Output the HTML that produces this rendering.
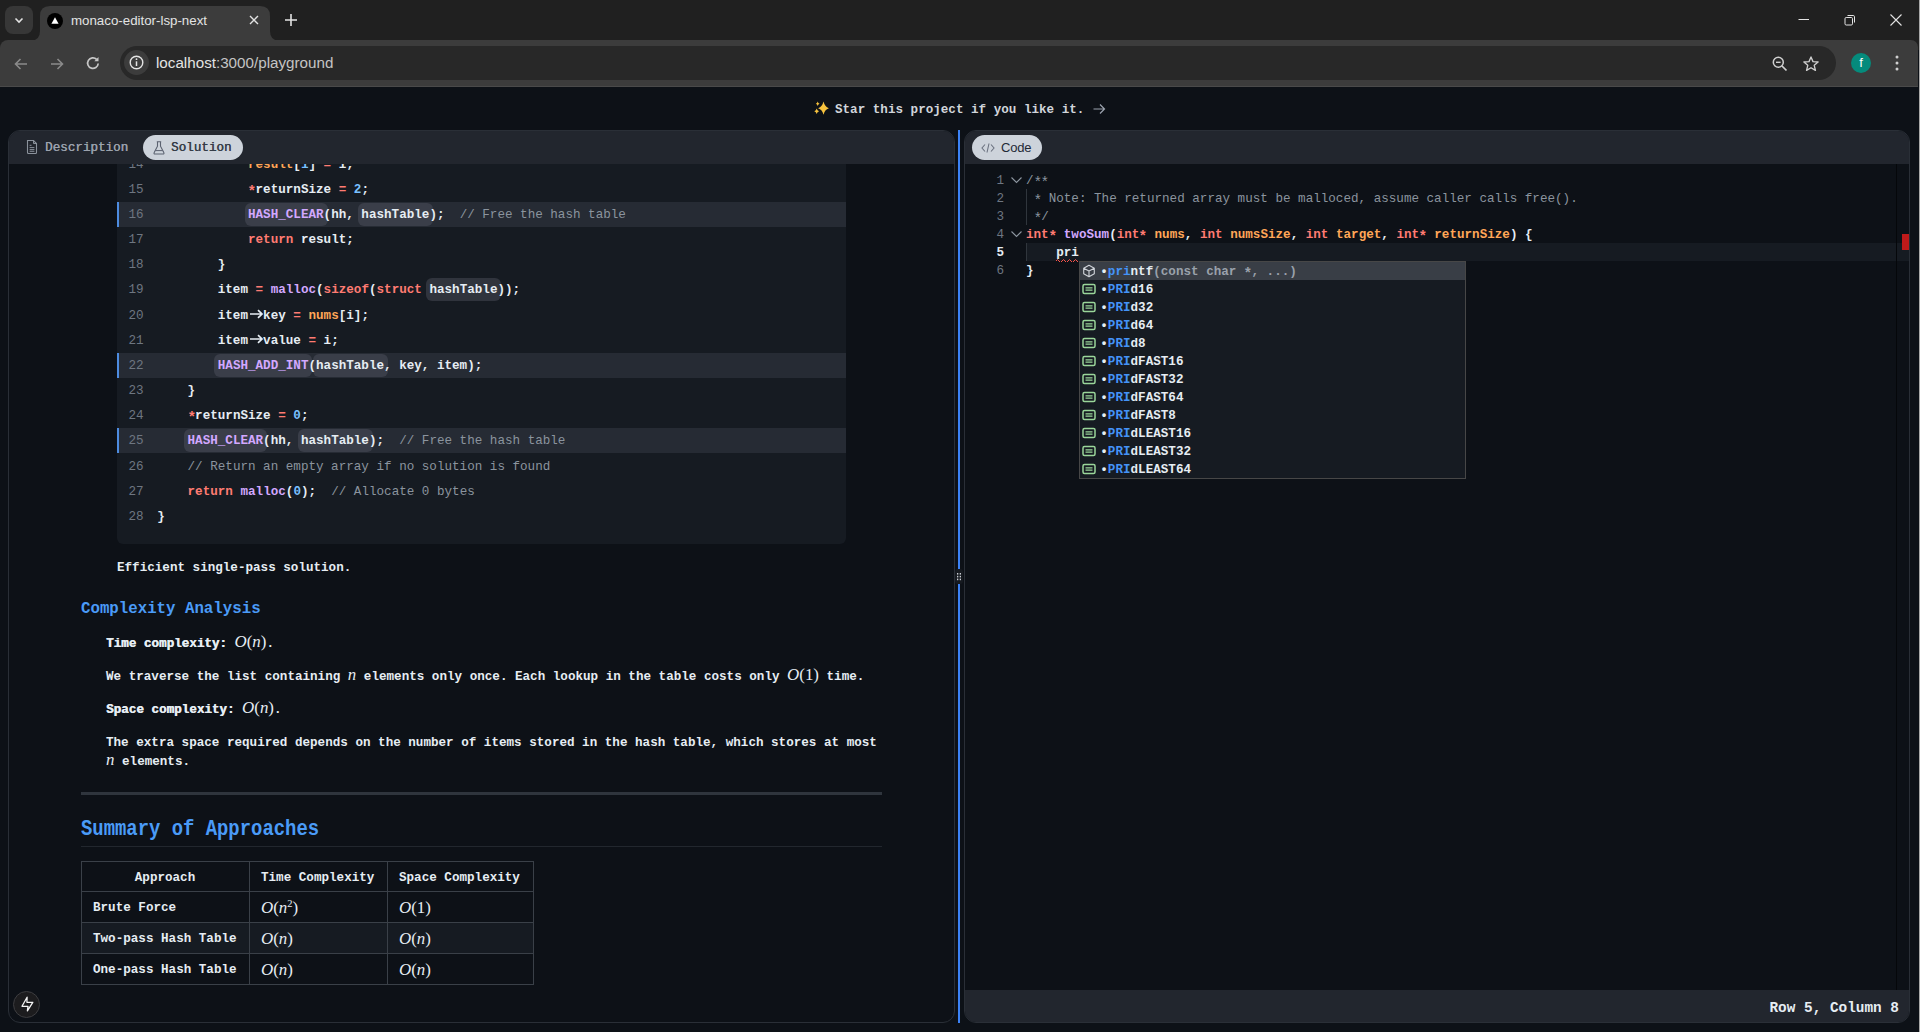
<!DOCTYPE html>
<html><head><meta charset="utf-8">
<style>
*{box-sizing:border-box;margin:0;padding:0}
html,body{width:1920px;height:1032px;overflow:hidden;background:#0d1117;font-family:"Liberation Sans",sans-serif}
.abs{position:absolute}
#tabstrip{left:0;top:0;width:1920px;height:50px;background:#202020}
#toolbar{left:0;top:40px;width:1918px;height:47px;background:#3c3c3c;border-radius:8px 7px 0 0}
.mono{font-family:"Liberation Mono",monospace}
#page{left:0;top:0;width:1920px;height:1032px}
.panel{border:1px solid #2a2f37;border-radius:12px;overflow:hidden;background:#0d1117}
.phead{left:0;top:0;right:0;height:33px;background:#22262e}
.pill{border-radius:13px;background:#cdd3db;color:#1f2329}
.ln{position:absolute;left:0;width:100%;height:25.15px;line-height:26.5px;white-space:pre;font-family:"Liberation Mono",monospace;font-size:12.6px;color:#e6edf3;font-weight:bold}
.num{position:absolute;left:0;width:27.5px;text-align:right;color:#6e7681;font-weight:normal}
.code{position:absolute;left:39.5px}
.k{color:#ff7b72}.f{color:#d2a8ff}.n{color:#79c0ff}.v{color:#ffa657}.c{color:#8b949e;font-weight:normal}
.hl{background:#262b34;border-left:2px solid #4f8fe0}
.tok{position:absolute;height:23px;top:1px;border-radius:6px;background:#30343d}
.hl .tok{background:#3a3e49}
.math{font-family:"Liberation Serif",serif;font-style:italic;font-size:15px}
.mr{font-family:"Liberation Serif",serif;font-style:normal;font-size:15px}
.ed{position:absolute;left:0;width:100%;height:18px;line-height:20px;font-weight:bold;white-space:pre;font-family:"Liberation Mono",monospace;font-size:12.6px;color:#e6edf3}
</style><style>
.mi{font-family:"Liberation Serif",serif;font-style:italic;font-size:16.9px;font-weight:normal;line-height:0}
.mr{font-family:"Liberation Serif",serif;font-style:normal;font-size:16.9px;font-weight:normal;line-height:0}
.ast{display:inline-block;transform:translateY(2.6px) scale(1.15)}
.xb{text-shadow:0.45px 0 0 currentColor}
.ms{font-family:"Liberation Serif",serif;font-size:10.5px;font-weight:normal;vertical-align:6px;line-height:0}
</style></head><body>
<!-- Chrome tab strip -->
<div id="tabstrip" class="abs">
  <div class="abs" style="left:5px;top:6px;width:28px;height:28px;border-radius:8px;background:#373737"></div>
  <svg class="abs" style="left:13px;top:14px" width="12" height="12" viewBox="0 0 12 12"><path d="M2.5 4.5 L6 8 L9.5 4.5" stroke="#e3e3e3" stroke-width="1.6" fill="none"/></svg>
  <svg class="abs" style="left:0;top:0" width="300" height="41" viewBox="0 0 300 41"><path d="M31 40.5 Q40 40.5 40 31 L40 16 Q40 6 50 6 L260 6 Q270 6 270 16 L270 31 Q270 40.5 279 40.5 Z" fill="#3c3c3c"/></svg>
  <div class="abs" style="left:47px;top:13px;width:16px;height:16px;border-radius:50%;background:#000"></div>
  <svg class="abs" style="left:47px;top:13px" width="16" height="16" viewBox="0 0 16 16"><path d="M8 4.2 L11.6 10.8 L4.4 10.8 Z" fill="#fff"/></svg>
  <div class="abs" style="left:71px;top:13px;font-size:13.3px;color:#e3e3e3;line-height:16px">monaco-editor-lsp-next</div>
  <svg class="abs" style="left:248px;top:14px" width="12" height="12" viewBox="0 0 12 12"><path d="M2 2 L10 10 M10 2 L2 10" stroke="#e3e3e3" stroke-width="1.4"/></svg>
  <svg class="abs" style="left:284px;top:13px" width="14" height="14" viewBox="0 0 14 14"><path d="M7 1 V13 M1 7 H13" stroke="#e3e3e3" stroke-width="1.6"/></svg>
  <svg class="abs" style="left:1797px;top:13px" width="14" height="12" viewBox="0 0 14 12"><path d="M1.5 6.5 H12" stroke="#e3e3e3" stroke-width="1"/></svg>
  <svg class="abs" style="left:1843px;top:13px" width="14" height="14" viewBox="0 0 14 14"><rect x="2" y="4.5" width="7.5" height="7.5" rx="1.2" stroke="#e3e3e3" stroke-width="1" fill="none"/><path d="M4.5 2.5 H10.2 Q11.5 2.5 11.5 3.8 V9.5" stroke="#e3e3e3" stroke-width="1" fill="none"/></svg>
  <svg class="abs" style="left:1889px;top:13px" width="14" height="14" viewBox="0 0 14 14"><path d="M1.5 1.5 L12.5 12.5 M12.5 1.5 L1.5 12.5" stroke="#e3e3e3" stroke-width="1.1"/></svg>
</div>
<!-- Toolbar -->
<div id="toolbar" class="abs">
  <svg class="abs" style="left:12px;top:15px" width="18" height="18" viewBox="0 0 18 18"><path d="M15 9 H3.5 M8.5 4 L3.5 9 L8.5 14" stroke="#8a8a8a" stroke-width="1.6" fill="none"/></svg>
  <svg class="abs" style="left:48px;top:15px" width="18" height="18" viewBox="0 0 18 18"><path d="M3 9 H14.5 M9.5 4 L14.5 9 L9.5 14" stroke="#8a8a8a" stroke-width="1.6" fill="none"/></svg>
  <svg class="abs" style="left:84px;top:14px" width="18" height="18" viewBox="0 0 18 18"><path d="M14.2 9.5 A5.3 5.3 0 1 1 12.6 5.3" stroke="#c7c7c7" stroke-width="1.7" fill="none"/><path d="M14.5 3 V7.2 H10.3 Z" fill="#c7c7c7"/></svg>
  <div class="abs" style="left:120px;top:6px;width:1716px;height:34px;border-radius:17px;background:#282828"></div>
  <div class="abs" style="left:124px;top:10px;width:25px;height:25px;border-radius:50%;background:#3c3c3c"></div>
  <svg class="abs" style="left:128px;top:14px" width="17" height="17" viewBox="0 0 17 17"><circle cx="8.5" cy="8.5" r="6.3" stroke="#e3e3e3" stroke-width="1.4" fill="none"/><path d="M8.5 7.3 V12" stroke="#e3e3e3" stroke-width="1.5"/><circle cx="8.5" cy="5.2" r="0.9" fill="#e3e3e3"/></svg>
  <div class="abs" style="left:156px;top:14px;font-size:15.2px;line-height:18px;color:#e3e3e3">localhost<span style="color:#c4c4c4">:3000/playground</span></div>
  <svg class="abs" style="left:1770.5px;top:14.5px" width="18" height="18" viewBox="0 0 18 18"><circle cx="7.3" cy="7.3" r="5" stroke="#d0d0d0" stroke-width="1.5" fill="none"/><path d="M11 11 L15.5 15.5" stroke="#d0d0d0" stroke-width="1.7"/><path d="M5 7.3 H9.6" stroke="#d0d0d0" stroke-width="1.4"/></svg>
  <svg class="abs" style="left:1801.5px;top:14.5px" width="18" height="18" viewBox="0 0 19 19"><path d="M9.5 2 L11.6 7 L17 7.4 L12.9 10.9 L14.2 16.2 L9.5 13.4 L4.8 16.2 L6.1 10.9 L2 7.4 L7.4 7 Z" stroke="#d0d0d0" stroke-width="1.4" fill="none" stroke-linejoin="round"/></svg>
  <div class="abs" style="left:1851px;top:13px;width:20px;height:20px;border-radius:50%;background:#058b7c;color:#fff;font-size:13px;line-height:20px;text-align:center">f</div>
  <svg class="abs" style="left:1893px;top:14px" width="8" height="18" viewBox="0 0 8 18"><circle cx="4" cy="3" r="1.5" fill="#d0d0d0"/><circle cx="4" cy="9" r="1.5" fill="#d0d0d0"/><circle cx="4" cy="15" r="1.5" fill="#d0d0d0"/></svg>
</div>
<div class="abs" style="left:0;top:86px;width:1918px;height:1px;background:#4a4a4a"></div>
<!-- Page -->
<div id="page" class="abs" style="top:0;height:1032px;background:transparent">
  <svg class="abs" style="left:810px;top:98px" width="24" height="20" viewBox="0 0 24 20"><path d="M13.5 3.600000000000003 Q14.69 8.75 18.9 10.200000000000003 Q14.69 11.65 13.5 16.800000000000004 Q12.31 11.65 8.1 10.200000000000003 Q12.31 8.75 13.5 3.600000000000003 Z M7.7000000000000455 3.5000000000000027 Q8.12 5.22 9.600000000000046 5.700000000000003 Q8.12 6.18 7.7000000000000455 7.900000000000003 Q7.28 6.18 5.800000000000045 5.700000000000003 Q7.28 5.22 7.7000000000000455 3.5000000000000027 Z M6.7000000000000455 10.500000000000004 Q7.23 12.61 9.100000000000046 13.200000000000003 Q7.23 13.79 6.7000000000000455 15.900000000000002 Q6.17 13.79 4.300000000000045 13.200000000000003 Q6.17 12.61 6.7000000000000455 10.500000000000004 Z" fill="#f6c23e"/></svg><div class="abs mono" style="left:835px;top:102px;font-size:12.6px;line-height:16px;color:#d1d5db;font-weight:bold;white-space:pre">Star this project if you like it.</div><svg class="abs" style="left:1092px;top:103px" width="14" height="12" viewBox="0 0 14 12"><path d="M1.5 6 H12.5 M8 1.5 L12.5 6 L8 10.5" stroke="#9ca3af" stroke-width="1.2" fill="none"/></svg>
</div>
<div id="left" class="abs panel" style="left:8px;top:130px;width:947px;height:893px"><div class="abs" style="left:0;top:33px;width:945px;height:858px;overflow:hidden">
<div class="abs" style="left:108px;top:-52.30px;width:729px;height:432.30px;background:#161b22;border-radius:6px"></div>
<div class="abs" style="left:108px;top:-12.30px;width:729px;height:25.15px">
<div class="ln num" style="left:0;width:26.69999999999999px">14</div>
<div class="ln" style="left:40.30000000000001px;width:auto">            <span class="v">result</span>[<span class="n">1</span>] <span class="k">=</span> i;</div>
</div>
<div class="abs" style="left:108px;top:12.85px;width:729px;height:25.15px">
<div class="ln num" style="left:0;width:26.69999999999999px">15</div>
<div class="ln" style="left:40.30000000000001px;width:auto">            <span class="k"><span class="ast">*</span></span>returnSize <span class="k">=</span> <span class="n">2</span>;</div>
</div>
<div class="abs" style="left:108px;top:38.00px;width:729px;height:25.15px">
<div class="abs" style="left:0;top:0;width:100%;height:100%;background:#262b34"></div>
<div class="abs" style="left:0;top:0;width:2px;height:100%;background:#4d8ce0"></div>
<div class="abs" style="left:127.62px;top:1px;width:83.00px;height:23px;border-radius:6px;background:#3a3e49"></div>
<div class="abs" style="left:241.02px;top:1px;width:75.44px;height:23px;border-radius:6px;background:#3a3e49"></div>
<div class="ln num" style="left:0;width:26.69999999999999px">16</div>
<div class="ln" style="left:40.30000000000001px;width:auto">            <span class="f">HASH_CLEAR</span>(hh, hashTable);  <span class="c">// Free the hash table</span></div>
</div>
<div class="abs" style="left:108px;top:63.15px;width:729px;height:25.15px">
<div class="ln num" style="left:0;width:26.69999999999999px">17</div>
<div class="ln" style="left:40.30000000000001px;width:auto">            <span class="k">return</span> result;</div>
</div>
<div class="abs" style="left:108px;top:88.30px;width:729px;height:25.15px">
<div class="ln num" style="left:0;width:26.69999999999999px">18</div>
<div class="ln" style="left:40.30000000000001px;width:auto">        }</div>
</div>
<div class="abs" style="left:108px;top:113.45px;width:729px;height:25.15px">
<div class="abs" style="left:309.06px;top:1px;width:75.44px;height:23px;border-radius:6px;background:#30343d"></div>
<div class="ln num" style="left:0;width:26.69999999999999px">19</div>
<div class="ln" style="left:40.30000000000001px;width:auto">        item <span class="k">=</span> <span class="f">malloc</span>(<span class="k">sizeof</span>(<span class="k">struct</span> hashTable));</div>
</div>
<div class="abs" style="left:108px;top:138.60px;width:729px;height:25.15px">
<div class="ln num" style="left:0;width:26.69999999999999px">20</div>
<div class="ln" style="left:40.30000000000001px;width:auto">        item<span style="display:inline-block;width:15.12px;height:10px;position:relative;vertical-align:0"><svg style="position:absolute;left:0.5px;top:0.5px" width="15" height="10" viewBox="0 0 15 10"><path d="M1 5 H13 M9 1.2 L13 5 L9 8.8" stroke="#e6edf3" stroke-width="1.7" fill="none"/></svg></span>key <span class="k">=</span> <span class="v">nums</span>[i];</div>
</div>
<div class="abs" style="left:108px;top:163.75px;width:729px;height:25.15px">
<div class="ln num" style="left:0;width:26.69999999999999px">21</div>
<div class="ln" style="left:40.30000000000001px;width:auto">        item<span style="display:inline-block;width:15.12px;height:10px;position:relative;vertical-align:0"><svg style="position:absolute;left:0.5px;top:0.5px" width="15" height="10" viewBox="0 0 15 10"><path d="M1 5 H13 M9 1.2 L13 5 L9 8.8" stroke="#e6edf3" stroke-width="1.7" fill="none"/></svg></span>value <span class="k">=</span> i;</div>
</div>
<div class="abs" style="left:108px;top:188.90px;width:729px;height:25.15px">
<div class="abs" style="left:0;top:0;width:100%;height:100%;background:#262b34"></div>
<div class="abs" style="left:0;top:0;width:2px;height:100%;background:#4d8ce0"></div>
<div class="abs" style="left:97.38px;top:1px;width:98.12px;height:23px;border-radius:6px;background:#3a3e49"></div>
<div class="abs" style="left:195.66px;top:1px;width:75.44px;height:23px;border-radius:6px;background:#3a3e49"></div>
<div class="ln num" style="left:0;width:26.69999999999999px">22</div>
<div class="ln" style="left:40.30000000000001px;width:auto">        <span class="f">HASH_ADD_INT</span>(hashTable, key, item);</div>
</div>
<div class="abs" style="left:108px;top:214.05px;width:729px;height:25.15px">
<div class="ln num" style="left:0;width:26.69999999999999px">23</div>
<div class="ln" style="left:40.30000000000001px;width:auto">    }</div>
</div>
<div class="abs" style="left:108px;top:239.20px;width:729px;height:25.15px">
<div class="ln num" style="left:0;width:26.69999999999999px">24</div>
<div class="ln" style="left:40.30000000000001px;width:auto">    <span class="k"><span class="ast">*</span></span>returnSize <span class="k">=</span> <span class="n">0</span>;</div>
</div>
<div class="abs" style="left:108px;top:264.35px;width:729px;height:25.15px">
<div class="abs" style="left:0;top:0;width:100%;height:100%;background:#262b34"></div>
<div class="abs" style="left:0;top:0;width:2px;height:100%;background:#4d8ce0"></div>
<div class="abs" style="left:67.14px;top:1px;width:83.00px;height:23px;border-radius:6px;background:#3a3e49"></div>
<div class="abs" style="left:180.54px;top:1px;width:75.44px;height:23px;border-radius:6px;background:#3a3e49"></div>
<div class="ln num" style="left:0;width:26.69999999999999px">25</div>
<div class="ln" style="left:40.30000000000001px;width:auto">    <span class="f">HASH_CLEAR</span>(hh, hashTable);  <span class="c">// Free the hash table</span></div>
</div>
<div class="abs" style="left:108px;top:289.50px;width:729px;height:25.15px">
<div class="ln num" style="left:0;width:26.69999999999999px">26</div>
<div class="ln" style="left:40.30000000000001px;width:auto">    <span class="c">// Return an empty array if no solution is found</span></div>
</div>
<div class="abs" style="left:108px;top:314.65px;width:729px;height:25.15px">
<div class="ln num" style="left:0;width:26.69999999999999px">27</div>
<div class="ln" style="left:40.30000000000001px;width:auto">    <span class="k">return</span> <span class="f">malloc</span>(<span class="n">0</span>);  <span class="c">// Allocate 0 bytes</span></div>
</div>
<div class="abs" style="left:108px;top:339.80px;width:729px;height:25.15px">
<div class="ln num" style="left:0;width:26.69999999999999px">28</div>
<div class="ln" style="left:40.30000000000001px;width:auto">}</div>
</div>
</div>
<div class="abs phead"></div>
<svg class="abs" style="left:16px;top:8px" width="14" height="16" viewBox="0 0 14 16"><path d="M2.5 1.5 H8.5 L11.5 4.5 V13.5 Q11.5 14.5 10.5 14.5 H3.5 Q2.5 14.5 2.5 13.5 Z" stroke="#8b929c" stroke-width="1.1" fill="none"/><path d="M8.5 1.5 V4.5 H11.5" stroke="#8b929c" stroke-width="1" fill="none"/><path d="M4.6 6.3 H6.5 M4.6 8.6 H9.4 M4.6 10.6 H9.4 M4.6 12.3 H9.4" stroke="#8b929c" stroke-width="1"/></svg>
<div class="abs mono" style="left:36px;top:9px;font-size:12.6px;line-height:17px;color:#9ba2ad;font-weight:normal;text-shadow:0.35px 0 0 currentColor">Description</div>
<div class="abs pill" style="left:134px;top:4px;width:100px;height:25px"></div>
<svg class="abs" style="left:143px;top:9px" width="14" height="16" viewBox="0 0 14 16"><path d="M4.8 1.8 H9.2 M5.5 1.8 V6.2 L2.2 12.6 Q1.6 14 3 14 H11 Q12.4 14 11.8 12.6 L8.5 6.2 V1.8" stroke="#5b6270" stroke-width="1.1" fill="none"/><path d="M3.5 10.6 H10.5" stroke="#5b6270" stroke-width="1"/></svg>
<div class="abs mono" style="left:162px;top:9px;font-size:12.6px;line-height:17px;color:#353c47;font-weight:normal;text-shadow:0.35px 0 0 currentColor">Solution</div></div>
<div class="abs" style="left:117px;top:561.13px;font-family:'Liberation Mono',monospace;font-size:12.6px;line-height:15.12px;color:#e6edf3;font-weight:bold;white-space:pre;">Efficient single-pass solution.</div>
<div class="abs" style="left:81px;top:600.34px;font-family:'Liberation Mono',monospace;font-size:15.75px;line-height:18.90px;color:#4a9bf7;font-weight:bold;white-space:pre;transform:scaleY(1.08);transform-origin:0 13.16px;">Complexity Analysis</div>
<div class="abs" style="left:106px;top:636.73px;font-family:'Liberation Mono',monospace;font-size:12.6px;line-height:15.12px;color:#e6edf3;font-weight:bold;white-space:pre;"><b class="xb">Time complexity:</b> <span class="mi">O</span><span class="mr">(</span><span class="mi">n</span><span class="mr">)</span>.</div>
<div class="abs" style="left:106px;top:669.93px;font-family:'Liberation Mono',monospace;font-size:12.6px;line-height:15.12px;color:#e6edf3;font-weight:bold;white-space:pre;">We traverse the list containing <span class="mi">n</span> elements only once. Each lookup in the table costs only <span class="mi">O</span><span class="mr">(1)</span> time.</div>
<div class="abs" style="left:106px;top:703.33px;font-family:'Liberation Mono',monospace;font-size:12.6px;line-height:15.12px;color:#e6edf3;font-weight:bold;white-space:pre;"><b class="xb">Space complexity:</b> <span class="mi">O</span><span class="mr">(</span><span class="mi">n</span><span class="mr">)</span>.</div>
<div class="abs" style="left:106px;top:735.83px;font-family:'Liberation Mono',monospace;font-size:12.6px;line-height:15.12px;color:#e6edf3;font-weight:bold;white-space:pre;">The extra space required depends on the number of items stored in the hash table, which stores at most</div>
<div class="abs" style="left:106px;top:754.93px;font-family:'Liberation Mono',monospace;font-size:12.6px;line-height:15.12px;color:#e6edf3;font-weight:bold;white-space:pre;"><span class="mi">n</span> elements.</div>
<div class="abs" style="left:81px;top:792px;width:801px;height:3px;background:#2f353d"></div>
<div class="abs" style="left:81px;top:819.25px;font-family:'Liberation Mono',monospace;font-size:18.9px;line-height:22.68px;color:#4a9bf7;font-weight:bold;white-space:pre;transform:scaleY(1.19);transform-origin:0 16.15px;">Summary of Approaches</div>
<div class="abs" style="left:81px;top:846px;width:801px;height:1px;background:#22272e"></div>
<div class="abs" style="left:81px;top:922px;width:452px;height:31px;background:#161b22"></div>
<div class="abs" style="left:81px;top:861px;width:1px;height:124px;background:#3a4048"></div>
<div class="abs" style="left:249px;top:861px;width:1px;height:124px;background:#3a4048"></div>
<div class="abs" style="left:387px;top:861px;width:1px;height:124px;background:#3a4048"></div>
<div class="abs" style="left:533px;top:861px;width:1px;height:124px;background:#3a4048"></div>
<div class="abs" style="left:81px;top:861px;width:453px;height:1px;background:#3a4048"></div>
<div class="abs" style="left:81px;top:891px;width:453px;height:1px;background:#3a4048"></div>
<div class="abs" style="left:81px;top:922px;width:453px;height:1px;background:#3a4048"></div>
<div class="abs" style="left:81px;top:953px;width:453px;height:1px;background:#3a4048"></div>
<div class="abs" style="left:81px;top:984px;width:453px;height:1px;background:#3a4048"></div>
<div class="abs mono" style="left:81px;top:861px;width:168px;height:30px;line-height:34.5px;text-align:center;font-size:12.6px;font-weight:bold;color:#e6edf3">Approach</div>
<div class="abs mono" style="left:261px;top:861px;height:30px;line-height:34.5px;font-size:12.6px;font-weight:bold;color:#e6edf3">Time Complexity</div>
<div class="abs mono" style="left:399px;top:861px;height:30px;line-height:34.5px;font-size:12.6px;font-weight:bold;color:#e6edf3">Space Complexity</div>
<div class="abs mono" style="left:93px;top:891px;height:31px;line-height:34px;font-size:12.6px;font-weight:bold;color:#e6edf3">Brute Force</div>
<div class="abs" style="left:261px;top:891px;height:31px;line-height:36px;font-size:12.6px;color:#e6edf3"><span class="mi">O</span><span class="mr">(</span><span class="mi">n</span><sup class="ms">2</sup><span class="mr">)</span></div>
<div class="abs" style="left:399px;top:891px;height:31px;line-height:36px;font-size:12.6px;color:#e6edf3"><span class="mi">O</span><span class="mr">(1)</span></div>
<div class="abs mono" style="left:93px;top:922px;height:31px;line-height:34px;font-size:12.6px;font-weight:bold;color:#e6edf3">Two-pass Hash Table</div>
<div class="abs" style="left:261px;top:922px;height:31px;line-height:36px;font-size:12.6px;color:#e6edf3"><span class="mi">O</span><span class="mr">(</span><span class="mi">n</span><span class="mr">)</span></div>
<div class="abs" style="left:399px;top:922px;height:31px;line-height:36px;font-size:12.6px;color:#e6edf3"><span class="mi">O</span><span class="mr">(</span><span class="mi">n</span><span class="mr">)</span></div>
<div class="abs mono" style="left:93px;top:953px;height:31px;line-height:34px;font-size:12.6px;font-weight:bold;color:#e6edf3">One-pass Hash Table</div>
<div class="abs" style="left:261px;top:953px;height:31px;line-height:36px;font-size:12.6px;color:#e6edf3"><span class="mi">O</span><span class="mr">(</span><span class="mi">n</span><span class="mr">)</span></div>
<div class="abs" style="left:399px;top:953px;height:31px;line-height:36px;font-size:12.6px;color:#e6edf3"><span class="mi">O</span><span class="mr">(</span><span class="mi">n</span><span class="mr">)</span></div>
<div class="abs" style="left:13px;top:991px;width:27px;height:27px;border-radius:50%;background:#1c1c1e;border:1px solid #3d3d40"></div>
<svg class="abs" style="left:20px;top:995px" width="16" height="18" viewBox="0 0 16 18"><path d="M7.1 2.2 L2 11.3 H8 L7.4 15.8 L12.8 7.3 H6.9 Z" stroke="#f4f4f4" stroke-width="1.3" fill="none" stroke-linejoin="round"/></svg>
<div class="abs" style="left:958px;top:130px;width:2px;height:893px;background:#3b82f6"></div><div class="abs" style="left:955px;top:569px;width:8px;height:15px;border-radius:3px;background:#161a20"></div><svg class="abs" style="left:955px;top:569px" width="8" height="15" viewBox="0 0 8 15"><g fill="#c8ccd2"><rect x="2" y="4" width="1.3" height="1.6"/><rect x="4.7" y="4" width="1.3" height="1.6"/><rect x="2" y="6.8" width="1.3" height="1.6"/><rect x="4.7" y="6.8" width="1.3" height="1.6"/><rect x="2" y="9.6" width="1.3" height="1.6"/><rect x="4.7" y="9.6" width="1.3" height="1.6"/></g></svg><div class="abs" style="left:1919px;top:0;width:1px;height:1032px;background:#a8a8a8"></div>
<div id="right" class="abs panel" style="left:964px;top:130px;width:946px;height:893px"><div class="abs phead"></div>
<div class="abs pill" style="left:7px;top:4px;width:70px;height:25px"></div>
<svg class="abs" style="left:16px;top:10px" width="14" height="14" viewBox="0 0 14 14"><path d="M4 3.5 L1 7 L4 10.5 M10 3.5 L13 7 L10 10.5 M8 2.5 L6 11.5" stroke="#6b7280" stroke-width="1.1" fill="none"/></svg>
<div class="abs" style="left:36px;top:8px;font-size:13px;line-height:17px;color:#1f2937;letter-spacing:-0.2px">Code</div>
<div class="abs" style="left:0;top:33px;width:944px;height:826px;background:#0d1117;overflow:hidden">
<div class="abs" style="left:62px;top:79px;width:882px;height:18px;background:#161b22"></div>
<div class="abs" style="left:61px;top:25px;width:1px;height:36px;background:#30363d"></div>
<div class="abs" style="left:61px;top:79px;width:1px;height:18px;background:#30363d"></div>
<div class="ed" style="left:-5px;width:44px;top:7px;text-align:right;color:#6e7681;font-weight:normal">1</div>
<div class="ed" style="left:61px;width:auto;top:7px"><span class="c">/<span class="ast">*</span><span class="ast">*</span></span></div>
<div class="ed" style="left:-5px;width:44px;top:25px;text-align:right;color:#6e7681;font-weight:normal">2</div>
<div class="ed" style="left:61px;width:auto;top:25px"><span class="c"> <span class="ast">*</span> Note: The returned array must be malloced, assume caller calls free().</span></div>
<div class="ed" style="left:-5px;width:44px;top:43px;text-align:right;color:#6e7681;font-weight:normal">3</div>
<div class="ed" style="left:61px;width:auto;top:43px"><span class="c"> <span class="ast">*</span>/</span></div>
<div class="ed" style="left:-5px;width:44px;top:61px;text-align:right;color:#6e7681;font-weight:normal">4</div>
<div class="ed" style="left:61px;width:auto;top:61px"><span class="k">int<span class="ast">*</span></span> <span class="f">twoSum</span>(<span class="k">int<span class="ast">*</span></span> <span class="v">nums</span>, <span class="k">int</span> <span class="v">numsSize</span>, <span class="k">int</span> <span class="v">target</span>, <span class="k">int<span class="ast">*</span></span> <span class="v">returnSize</span>) {</div>
<div class="ed" style="left:-5px;width:44px;top:79px;text-align:right;color:#e6edf3;font-weight:bold">5</div>
<div class="ed" style="left:61px;width:auto;top:79px">    pri</div>
<div class="ed" style="left:-5px;width:44px;top:97px;text-align:right;color:#6e7681;font-weight:normal">6</div>
<div class="ed" style="left:61px;width:auto;top:97px">}</div>
<svg class="abs" style="left:45px;top:10px" width="13" height="12" viewBox="0 0 13 12"><path d="M1.5 3.5 L6.5 8.5 L11.5 3.5" stroke="#8b949e" stroke-width="1.1" fill="none"/></svg>
<svg class="abs" style="left:45px;top:64px" width="13" height="12" viewBox="0 0 13 12"><path d="M1.5 3.5 L6.5 8.5 L11.5 3.5" stroke="#8b949e" stroke-width="1.1" fill="none"/></svg>
<svg class="abs" style="left:91.24000000000001px;top:94px" width="23" height="4" viewBox="0 0 23 4"><path d="M0 3 Q1.5 0 3 3 T6 3 T9 3 T12 3 T15 3 T18 3 T21 3 T24 3" stroke="#f85149" stroke-width="1" fill="none"/></svg>
<div class="abs" style="left:931px;top:0;width:1px;height:100%;background:#05070a"></div>
<div class="abs" style="left:937px;top:70px;width:7px;height:16px;background:#c01a1a"></div>
<div class="abs" style="left:114px;top:97px;width:387px;height:218px;background:#161b22;border:1px solid #474747"></div>
<div class="abs" style="left:115px;top:98px;width:385px;height:18px;background:#393e46"></div>
<svg class="abs" style="left:117px;top:100px" width="14" height="14" viewBox="0 0 14 14"><path d="M7 1.3 L12.3 4.2 V9.8 L7 12.7 L1.7 9.8 V4.2 Z M1.7 4.2 L7 7 L12.3 4.2 M7 7 V12.7" stroke="#d0d4da" stroke-width="1.1" fill="none" stroke-linejoin="round"/></svg>
<div class="ed" style="left:135.29999999999995px;width:auto;top:98px;font-weight:bold"><span style="color:#e6edf3">•</span><span style="color:#4493f8">pri</span>ntf<span style="color:#9aa1ab">(const char <span class="ast">*</span>, ...)</span></div>
<svg class="abs" style="left:117px;top:118px" width="14" height="14" viewBox="0 0 14 14"><rect x="1" y="2.5" width="12" height="9" rx="1.5" stroke="#9ad69a" stroke-width="1.5" fill="none"/><path d="M3.5 5.8 H10.5 M3.5 8.2 H10.5" stroke="#9ad69a" stroke-width="1.3"/></svg>
<div class="ed" style="left:135.29999999999995px;width:auto;top:116px;font-weight:bold">•<span style="color:#4493f8">PRI</span>d16</div>
<svg class="abs" style="left:117px;top:136px" width="14" height="14" viewBox="0 0 14 14"><rect x="1" y="2.5" width="12" height="9" rx="1.5" stroke="#9ad69a" stroke-width="1.5" fill="none"/><path d="M3.5 5.8 H10.5 M3.5 8.2 H10.5" stroke="#9ad69a" stroke-width="1.3"/></svg>
<div class="ed" style="left:135.29999999999995px;width:auto;top:134px;font-weight:bold">•<span style="color:#4493f8">PRI</span>d32</div>
<svg class="abs" style="left:117px;top:154px" width="14" height="14" viewBox="0 0 14 14"><rect x="1" y="2.5" width="12" height="9" rx="1.5" stroke="#9ad69a" stroke-width="1.5" fill="none"/><path d="M3.5 5.8 H10.5 M3.5 8.2 H10.5" stroke="#9ad69a" stroke-width="1.3"/></svg>
<div class="ed" style="left:135.29999999999995px;width:auto;top:152px;font-weight:bold">•<span style="color:#4493f8">PRI</span>d64</div>
<svg class="abs" style="left:117px;top:172px" width="14" height="14" viewBox="0 0 14 14"><rect x="1" y="2.5" width="12" height="9" rx="1.5" stroke="#9ad69a" stroke-width="1.5" fill="none"/><path d="M3.5 5.8 H10.5 M3.5 8.2 H10.5" stroke="#9ad69a" stroke-width="1.3"/></svg>
<div class="ed" style="left:135.29999999999995px;width:auto;top:170px;font-weight:bold">•<span style="color:#4493f8">PRI</span>d8</div>
<svg class="abs" style="left:117px;top:190px" width="14" height="14" viewBox="0 0 14 14"><rect x="1" y="2.5" width="12" height="9" rx="1.5" stroke="#9ad69a" stroke-width="1.5" fill="none"/><path d="M3.5 5.8 H10.5 M3.5 8.2 H10.5" stroke="#9ad69a" stroke-width="1.3"/></svg>
<div class="ed" style="left:135.29999999999995px;width:auto;top:188px;font-weight:bold">•<span style="color:#4493f8">PRI</span>dFAST16</div>
<svg class="abs" style="left:117px;top:208px" width="14" height="14" viewBox="0 0 14 14"><rect x="1" y="2.5" width="12" height="9" rx="1.5" stroke="#9ad69a" stroke-width="1.5" fill="none"/><path d="M3.5 5.8 H10.5 M3.5 8.2 H10.5" stroke="#9ad69a" stroke-width="1.3"/></svg>
<div class="ed" style="left:135.29999999999995px;width:auto;top:206px;font-weight:bold">•<span style="color:#4493f8">PRI</span>dFAST32</div>
<svg class="abs" style="left:117px;top:226px" width="14" height="14" viewBox="0 0 14 14"><rect x="1" y="2.5" width="12" height="9" rx="1.5" stroke="#9ad69a" stroke-width="1.5" fill="none"/><path d="M3.5 5.8 H10.5 M3.5 8.2 H10.5" stroke="#9ad69a" stroke-width="1.3"/></svg>
<div class="ed" style="left:135.29999999999995px;width:auto;top:224px;font-weight:bold">•<span style="color:#4493f8">PRI</span>dFAST64</div>
<svg class="abs" style="left:117px;top:244px" width="14" height="14" viewBox="0 0 14 14"><rect x="1" y="2.5" width="12" height="9" rx="1.5" stroke="#9ad69a" stroke-width="1.5" fill="none"/><path d="M3.5 5.8 H10.5 M3.5 8.2 H10.5" stroke="#9ad69a" stroke-width="1.3"/></svg>
<div class="ed" style="left:135.29999999999995px;width:auto;top:242px;font-weight:bold">•<span style="color:#4493f8">PRI</span>dFAST8</div>
<svg class="abs" style="left:117px;top:262px" width="14" height="14" viewBox="0 0 14 14"><rect x="1" y="2.5" width="12" height="9" rx="1.5" stroke="#9ad69a" stroke-width="1.5" fill="none"/><path d="M3.5 5.8 H10.5 M3.5 8.2 H10.5" stroke="#9ad69a" stroke-width="1.3"/></svg>
<div class="ed" style="left:135.29999999999995px;width:auto;top:260px;font-weight:bold">•<span style="color:#4493f8">PRI</span>dLEAST16</div>
<svg class="abs" style="left:117px;top:280px" width="14" height="14" viewBox="0 0 14 14"><rect x="1" y="2.5" width="12" height="9" rx="1.5" stroke="#9ad69a" stroke-width="1.5" fill="none"/><path d="M3.5 5.8 H10.5 M3.5 8.2 H10.5" stroke="#9ad69a" stroke-width="1.3"/></svg>
<div class="ed" style="left:135.29999999999995px;width:auto;top:278px;font-weight:bold">•<span style="color:#4493f8">PRI</span>dLEAST32</div>
<svg class="abs" style="left:117px;top:298px" width="14" height="14" viewBox="0 0 14 14"><rect x="1" y="2.5" width="12" height="9" rx="1.5" stroke="#9ad69a" stroke-width="1.5" fill="none"/><path d="M3.5 5.8 H10.5 M3.5 8.2 H10.5" stroke="#9ad69a" stroke-width="1.3"/></svg>
<div class="ed" style="left:135.29999999999995px;width:auto;top:296px;font-weight:bold">•<span style="color:#4493f8">PRI</span>dLEAST64</div>
</div>
<div class="abs" style="left:0;top:859px;width:944px;height:33px;background:#22262e"></div>
<div class="abs mono" style="left:735px;width:199px;top:868px;text-align:right;font-size:14.4px;line-height:18px;color:#e6edf3;font-weight:bold">Row 5, Column 8</div></div>
</body></html>
